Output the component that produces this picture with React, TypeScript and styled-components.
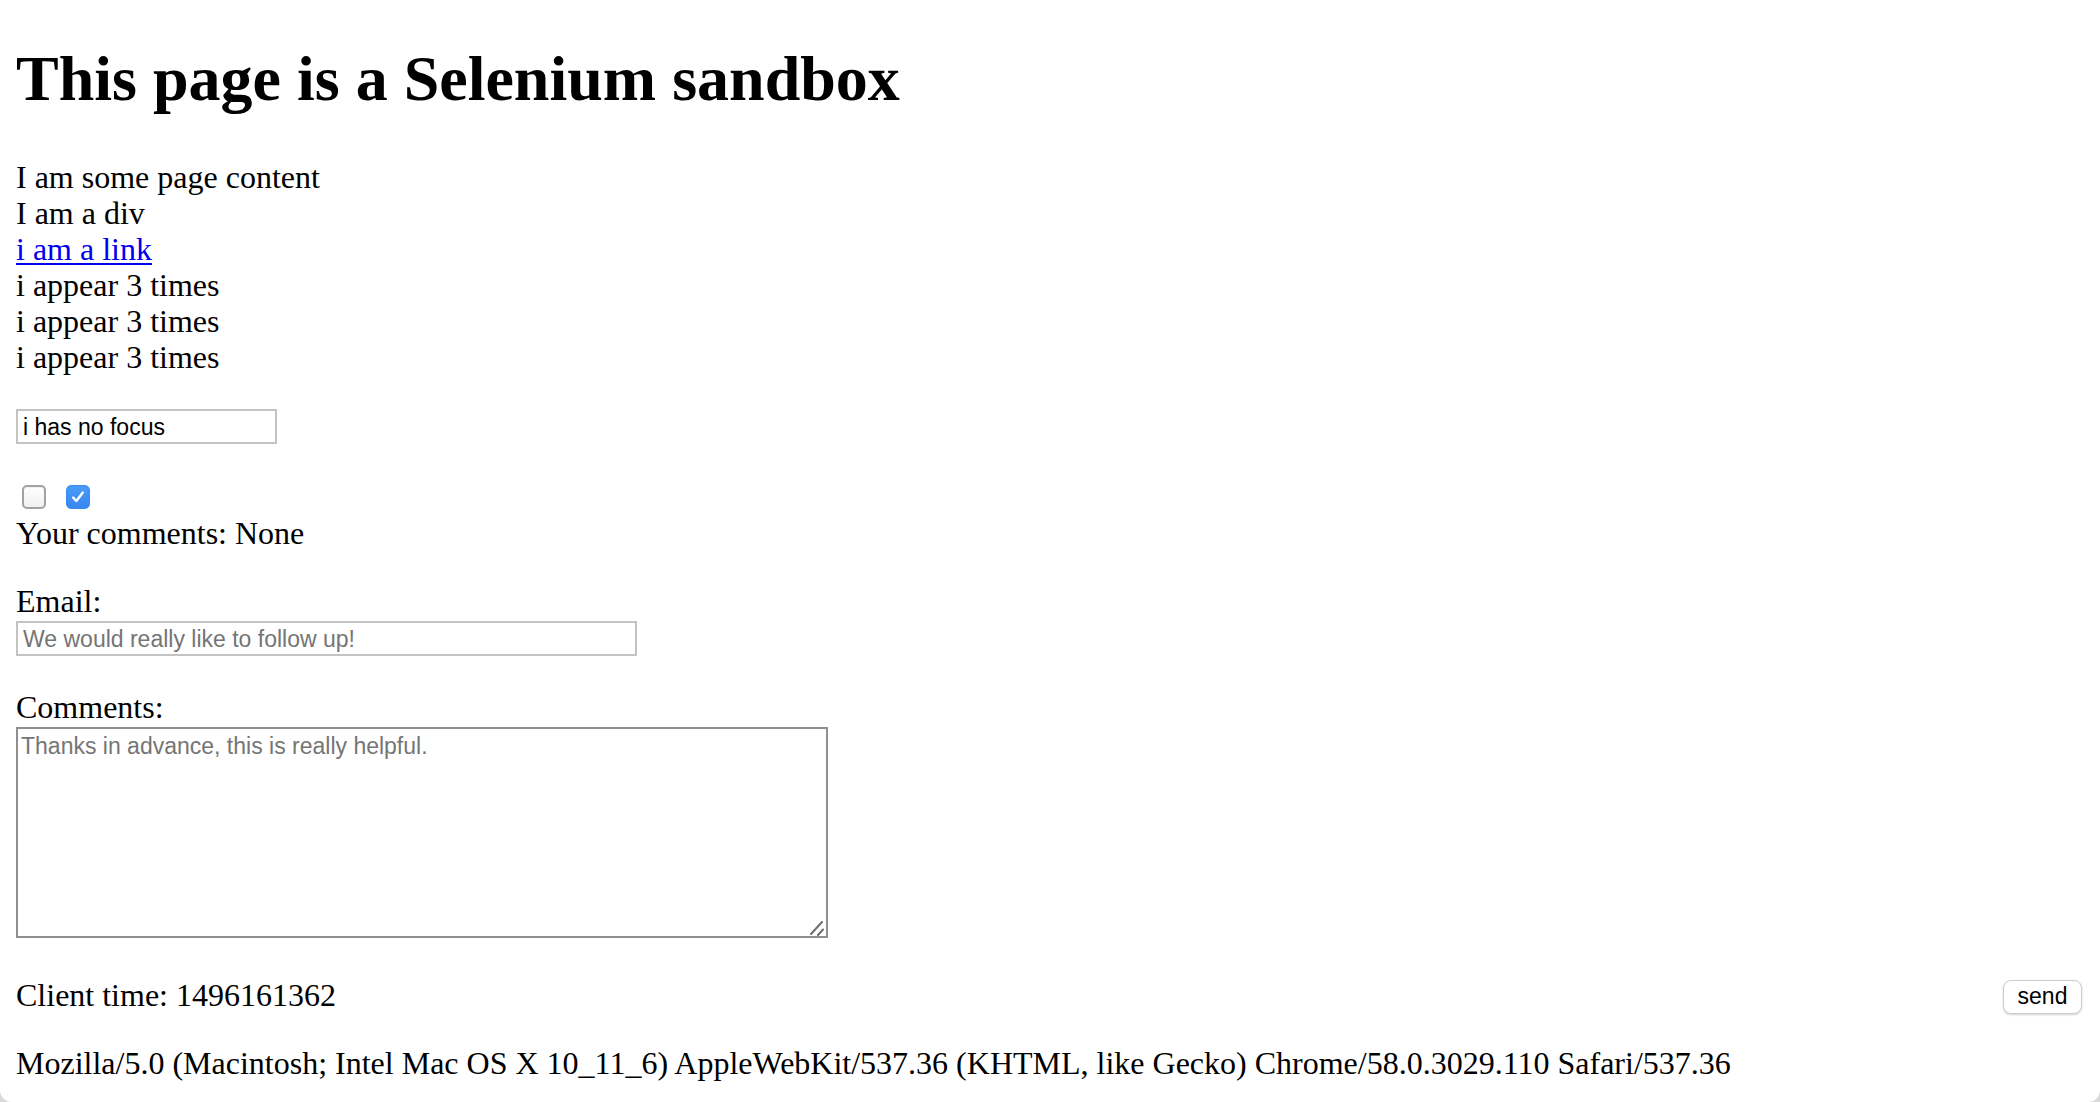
import React from "react";
import styled, { createGlobalStyle } from "styled-components";

const Global = createGlobalStyle`
  html {
    background: #dadada;
  }
  body {
    margin: 0;
    background: #dadada;
  }
  * { box-sizing: border-box; }
`;

const Page = styled.div`
  display: flex;
  flex-direction: column;
  align-items: flex-start;
  min-height: 1102px;
  padding: 0 16px;
  background: #ffffff;
  border-radius: 0 0 12px 12px;
  font-family: "Liberation Serif", "Times New Roman", serif;
  font-size: 32px;
  line-height: 36px;
  color: #000;
`;

const Title = styled.h1`
  margin: 42.9px 0 0 0;
  font-size: 64px;
  line-height: 71px;
  font-weight: bold;
`;

const Lines = styled.div`
  margin-top: 45.3px;
  display: flex;
  flex-direction: column;
`;

const Line = styled.div<{ $gap?: number }>`
  margin-top: ${(p) => p.$gap ?? 0}px;
  white-space: nowrap;
`;

const Link = styled.a`
  color: #0000ee;
  text-decoration: underline;
  text-underline-offset: 3px;
  text-decoration-thickness: 2px;
`;

const TextInput = styled.input<{ $width: number; $gap: number }>`
  margin-top: ${(p) => p.$gap}px;
  width: ${(p) => p.$width}px;
  height: 35px;
  padding: 1px 5px 0 5px;
  border: 2px solid #c3c3c3;
  border-radius: 0;
  font-family: "Liberation Sans", Arial, sans-serif;
  font-size: 23px;
  color: #000;
  background: #fff;
  outline: none;
  &::placeholder {
    color: #757575;
  }
`;

const CheckRow = styled.div`
  margin-top: 40.7px;
  display: flex;
  gap: 20px;
  padding-left: 6px;
`;

const Box = styled.span<{ $checked?: boolean }>`
  display: flex;
  align-items: center;
  justify-content: center;
  width: 24px;
  height: 24px;
  border-radius: 5px;
  border: ${(p) => (p.$checked ? "1px solid #3a8cf2" : "2px solid #a2a2a2")};
  background: ${(p) =>
    p.$checked
      ? "linear-gradient(#4a9af7, #3787f0)"
      : "linear-gradient(#ffffff, #f0f0f0)"};
  box-shadow: ${(p) =>
    p.$checked ? "none" : "inset 0 1px 1px rgba(0,0,0,0.06)"};
`;

const AreaWrap = styled.div`
  position: relative;
  margin-top: 2.5px;
  width: 812px;
  height: 211px;
`;

const TextArea = styled.textarea`
  display: block;
  width: 100%;
  height: 100%;
  padding: 4px 3px;
  border: 2px solid #8f8f8f;
  border-radius: 0;
  font-family: "Liberation Sans", Arial, sans-serif;
  font-size: 23px;
  line-height: 26.4px;
  color: #000;
  background: #fff;
  outline: none;
  resize: none;
  &::placeholder {
    color: #757575;
  }
`;

const Grip = styled.svg`
  position: absolute;
  right: 3px;
  bottom: 2px;
  width: 16px;
  height: 16px;
  pointer-events: none;
`;

const FooterRow = styled.div`
  margin-top: 38.2px;
  align-self: stretch;
  display: flex;
  justify-content: space-between;
  align-items: flex-start;
  margin-right: 2px;
`;

const SendButton = styled.button`
  margin-top: 3px;
  width: 79px;
  height: 34px;
  padding: 0;
  border: 1px solid #cdcdcd;
  border-radius: 8px;
  background: #ffffff;
  box-shadow: 0 1px 2px rgba(0, 0, 0, 0.18);
  font-family: "Liberation Sans", Arial, sans-serif;
  font-size: 23px;
  color: #000;
  cursor: pointer;
`;

const Agent = styled.div`
  margin-top: 31.2px;
  white-space: nowrap;
`;

function Checkbox({ checked }: { checked?: boolean }) {
  return (
    <Box $checked={checked} role="checkbox" aria-checked={!!checked}>
      {checked && (
        <svg width="18" height="18" viewBox="0 0 18 18" fill="none">
          <path
            d="M4.2 9.6 L7.4 13 L13.8 4.6"
            stroke="#ffffff"
            strokeWidth="2.4"
            strokeLinecap="round"
            strokeLinejoin="round"
          />
        </svg>
      )}
    </Box>
  );
}

export default function App() {
  return (
    <>
      <Global />
      <Page>
        <Title>This page is a Selenium sandbox</Title>
        <Lines>
          <Line>I am some page content</Line>
          <Line>I am a div</Line>
          <Line>
            <Link href="#">i am a link</Link>
          </Line>
          <Line>i appear 3 times</Line>
          <Line>i appear 3 times</Line>
          <Line>i appear 3 times</Line>
        </Lines>
        <TextInput $width={261} $gap={34.1} defaultValue="i has no focus" />
        <CheckRow>
          <Checkbox />
          <Checkbox checked />
        </CheckRow>
        <Line $gap={6.1}>Your comments: None</Line>
        <Line $gap={31.8}>Email:</Line>
        <TextInput
          $width={621}
          $gap={2.5}
          placeholder="We would really like to follow up!"
        />
        <Line $gap={32.5}>Comments:</Line>
        <AreaWrap>
          <TextArea placeholder="Thanks in advance, this is really helpful." />
          <Grip viewBox="0 0 16 16">
            <path
              d="M2 14 L13 2 M9 15 L14 9.5"
              stroke="#6e6e6e"
              strokeWidth="2"
              strokeLinecap="round"
            />
          </Grip>
        </AreaWrap>
        <FooterRow>
          <span>Client time: 1496161362</span>
          <SendButton>send</SendButton>
        </FooterRow>
        <Agent>
          Mozilla/5.0 (Macintosh; Intel Mac OS X 10_11_6) AppleWebKit/537.36
          (KHTML, like Gecko) Chrome/58.0.3029.110 Safari/537.36
        </Agent>
      </Page>
    </>
  );
}
